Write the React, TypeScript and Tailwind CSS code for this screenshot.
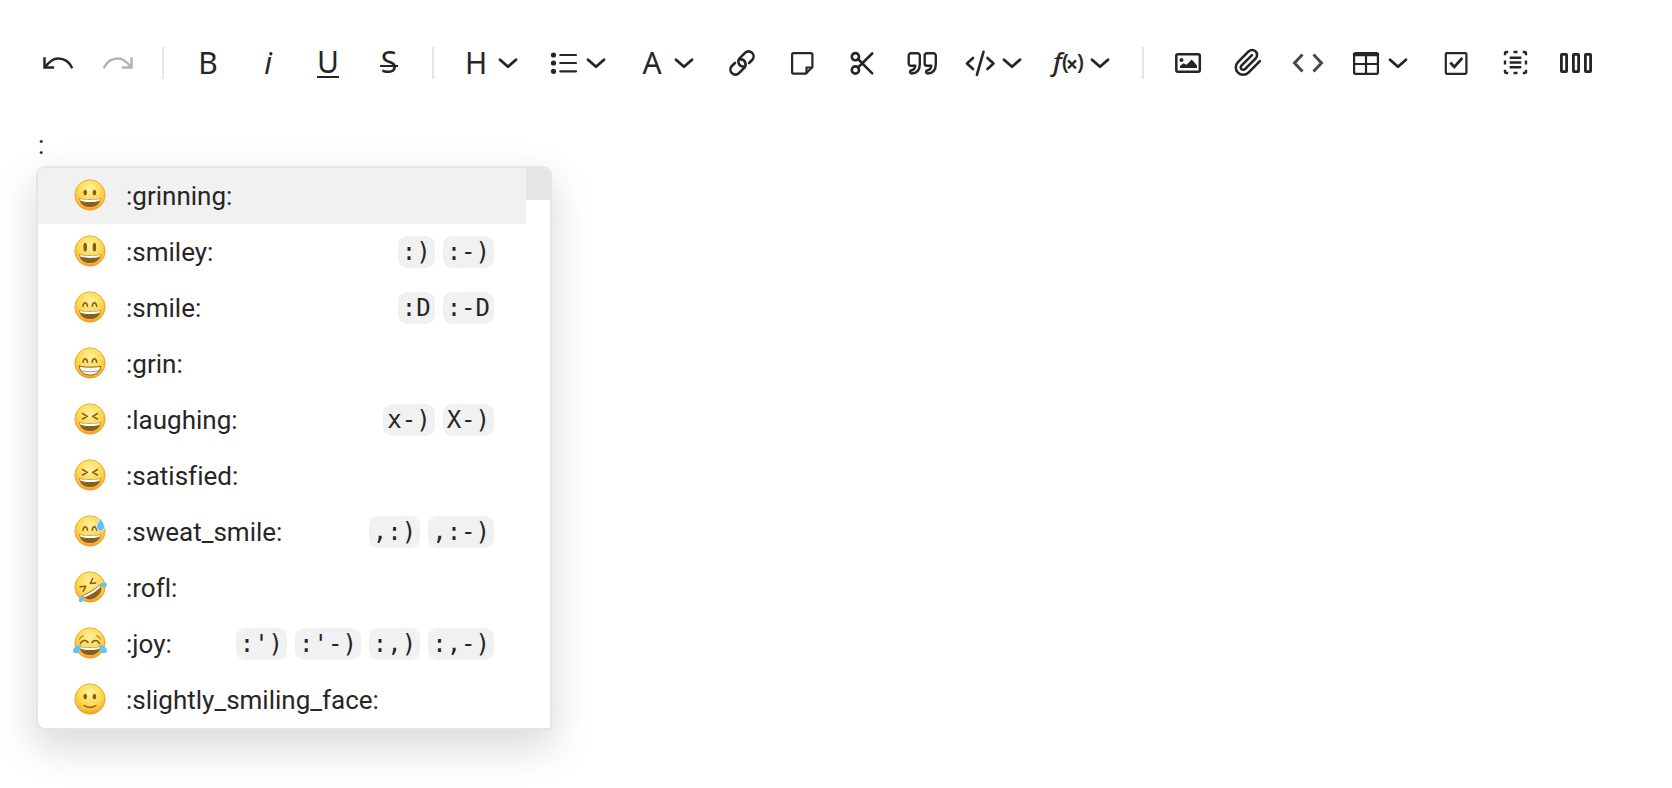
import { ReactNode } from "react";

interface IconProps {
    children: ReactNode;
    width?: number;
}

function Icon({ children, width = 2.2 }: IconProps) {
    return (
        <svg
            viewBox="0 0 32 32"
            className="size-8 shrink-0"
            fill="none"
            stroke="currentColor"
            strokeWidth={width}
            strokeLinecap="round"
            strokeLinejoin="round"
            aria-hidden="true"
        >
            {children}
        </svg>
    )
}

interface ToolProps {
    label: string;
    children: ReactNode;
    menu?: boolean;
    disabled?: boolean;
}

function Tool({ label, children, menu, disabled }: ToolProps) {
    return (
        <button
            type="button"
            aria-label={label}
            aria-haspopup={menu ? "menu" : undefined}
            disabled={disabled}
            className="flex h-16 shrink-0 items-center px-3.5 text-[#262626] disabled:text-[#b3b3b3] aria-[haspopup=menu]:px-3"
        >
            {children}
            {menu && (
                <Icon width={2.8}>
                    <path d="M8 12.7l8 7 8-7" />
                </Icon>
            )}
        </button>
    )
}

function Letter({ children }: { children: ReactNode }) {
    return <span className="flex size-8 items-center justify-center font-['Noto_Sans',sans-serif] text-[30px] leading-8">{children}</span>
}

function Separator() {
    return <span className="mx-3.5 h-8 w-0.5 shrink-0 bg-[#e5e5e5]" />
}

function Toolbar() {
    return (
        <div role="toolbar" aria-label="Formatting" className="flex items-center px-7 pt-[31px]">
            <Tool label="Undo">
                <Icon width={2.5}>
                    <g strokeLinecap="butt" strokeLinejoin="miter">
                        <path d="M2.5 10.3v10.2h9.6" />
                        <path d="M3 20.5C7.5 14 11.5 11.5 16 11.5c6 0 11.5 3.5 14.2 9.7" />
                    </g>
                </Icon>
            </Tool>
            <Tool label="Redo" disabled>
                <Icon width={2.5}>
                    <g strokeLinecap="butt" strokeLinejoin="miter">
                        <path d="M29.5 10.3v10.2h-9.6" />
                        <path d="M29 20.5C24.5 14 20.5 11.5 16 11.5c-6 0-11.5 3.5-14.2 9.7" />
                    </g>
                </Icon>
            </Tool>
            <Separator />
            <Tool label="Bold"><Letter>B</Letter></Tool>
            <Tool label="Italic"><Letter><i>i</i></Letter></Tool>
            <Tool label="Underline">
                <Letter><span className="border-b-2 border-current leading-7">U</span></Letter>
            </Tool>
            <Tool label="Strikethrough">
                <svg viewBox="0 0 32 32" className="size-8 overflow-visible fill-current font-['Noto_Sans',sans-serif]" aria-hidden="true">
                    <text x="17" y="26" fontSize="30" textAnchor="middle">S</text>
                    <rect x="8" y="18" width="18" height="2" />
                </svg>
            </Tool>
            <Separator />
            <Tool label="Heading" menu><Letter>H</Letter></Tool>
            <Tool label="List" menu>
                <Icon>
                    <g fill="currentColor" stroke="none">
                        <circle cx="5.5" cy="8" r="2.6" />
                        <circle cx="5.5" cy="16" r="2.6" />
                        <circle cx="5.5" cy="24.3" r="2.6" />
                    </g>
                    <path d="M12.3 8h15.7M12.3 16h15.7M12.3 24.3h15.7" />
                </Icon>
            </Tool>
            <Tool label="Text color" menu><Letter>A</Letter></Tool>
            <Tool label="Link">
                <Icon width={2.6}>
                    <g transform="translate(16 16) rotate(-45)">
                        <path d="M5 5H9.3A5 5 0 0 0 9.3-5H1.8A5 5 0 0 0-1.7 3.4" />
                        <path d="M-5-5H-9.3A5 5 0 0 0-9.3 5H-1.8A5 5 0 0 0 1.7-3.4" />
                    </g>
                </Icon>
            </Tool>
            <Tool label="Note">
                <Icon>
                    <path d="M7.6 6.2h17.3a1.5 1.5 0 0 1 1.5 1.5v12.3l-6.4 6.6H7.6a1.5 1.5 0 0 1-1.5-1.5V7.7a1.5 1.5 0 0 1 1.5-1.5z" />
                    <path d="M26 20.5h-5.5v5.5" />
                </Icon>
            </Tool>
            <Tool label="Cut">
                <Icon width={2.6}>
                    <circle cx="9.4" cy="9.7" r="3.6" />
                    <circle cx="9.4" cy="23" r="3.6" />
                    <path d="M26.2 6.5L12 20.5M12 12l14.2 14.3" />
                </Icon>
            </Tool>
            <Tool label="Quote">
                <Icon width={2.4}>
                    <path d="M5 6.3h6.5a2.3 2.3 0 0 1 2.3 2.3V17c0 6-3 9.3-8.3 9.5-1.7 0-2-2.5-.4-3 2.8-.8 4-2.2 4.2-4.7H5a2.3 2.3 0 0 1-2.3-2.3V8.6A2.3 2.3 0 0 1 5 6.3z" />
                    <path d="M21 6.3h6.5a2.3 2.3 0 0 1 2.3 2.3V17c0 6-3 9.3-8.3 9.5-1.7 0-2-2.5-.4-3 2.8-.8 4-2.2 4.2-4.7H21a2.3 2.3 0 0 1-2.3-2.3V8.6A2.3 2.3 0 0 1 21 6.3z" />
                </Icon>
            </Tool>
            <Tool label="Code" menu>
                <Icon width={2.6}>
                    <path d="M9 11l-6 5.5L9 22M23.5 11l6 5.5-6 5.5M19.5 4.8l-6.6 23" />
                </Icon>
            </Tool>
            <Tool label="Formula" menu>
                <svg viewBox="0 0 32 32" className="size-8 shrink-0 overflow-visible fill-current font-['Noto_Sans',sans-serif]" aria-hidden="true">
                    <text x="1" y="24" fontSize="26" fontWeight="500" fontStyle="italic">f</text>
                    <text x="10" y="23" fontSize="21" fontWeight="600">(</text>
                    <text x="14" y="25" fontSize="21" fontWeight="700">×</text>
                    <text x="25" y="23" fontSize="21" fontWeight="600">)</text>
                </svg>
            </Tool>
            <Separator />
            <Tool label="Image">
                <Icon width={2.5}>
                    <rect x="4.3" y="7.3" width="23.5" height="17.5" rx="1.5" />
                    <g fill="currentColor" stroke="none">
                        <circle cx="9.5" cy="13" r="2" />
                        <path d="M8 21v-2l3.5-2.7 3 1.5 5.3-5.3 5.2 6V21z" />
                    </g>
                </Icon>
            </Tool>
            <Tool label="File">
                <Icon width={2.1}>
                    <path
                        transform="translate(1.3 .5) scale(1.24)"
                        d="m21.44 11.05-9.19 9.19a6 6 0 0 1-8.49-8.49l8.57-8.57A4 4 0 1 1 18 8.84l-8.59 8.57a2 2 0 0 1-2.83-2.83l8.49-8.48"
                    />
                </Icon>
            </Tool>
            <Tool label="HTML">
                <Icon width={3}>
                    <path className="stroke-[#4a4a4a]" strokeLinecap="butt" strokeLinejoin="miter" d="M10.5 7.5L2.5 16l8 8.500M21.5 7.500l8 8.500-8 8.500" />
                </Icon>
            </Tool>
            <Tool label="Table" menu>
                <Icon>
                    <rect x="4.1" y="6.2" width="23.8" height="20.6" rx="1.5" />
                    <path d="M4.5 7.5h23" strokeWidth="3.5" />
                    <path d="M4 17h24M16 8v18" />
                </Icon>
            </Tool>
            <Tool label="Checkbox">
                <Icon>
                    <rect x="5.8" y="6.2" width="20.6" height="20.6" rx="1" />
                    <path d="M10.3 15.5l4 4.500 8-9" strokeWidth="2.7" strokeLinecap="butt" strokeLinejoin="miter" />
                </Icon>
            </Tool>
            <Tool label="Template">
                <Icon width={2.4}>
                    <path d="M5 8.200V6.500A1.500 1.500 0 0 1 6.500 5H8.200M22.800 5h1.700A1.500 1.500 0 0 1 26 6.500v1.700M26 22.800v1.700a1.500 1.500 0 0 1-1.500 1.500h-1.700M8.200 26H6.500A1.500 1.500 0 0 1 5 24.500v-1.700" strokeLinecap="butt" />
                    <path d="M13.500 5h4M13.500 26h4M5 13.500v4M26 13.500v4" strokeLinecap="butt" />
                    <path d="M9.700 10.800h11.600M9.700 15.500h11.600M9.700 20.200h11.600" strokeLinecap="butt" />
                </Icon>
            </Tool>
            <Tool label="Columns">
                <Icon width={2.8}>
                    <rect x="1.4" y="7.4" width="5.2" height="17.2" rx=".5" />
                    <rect x="13.4" y="7.4" width="5.2" height="17.2" rx=".5" />
                    <rect x="25.4" y="7.4" width="5.2" height="17.2" rx=".5" />
                </Icon>
            </Tool>
        </div>
    )
}

const dotEyes = (
    <g fill="#8a5a14">
        <ellipse cx="11.2" cy="12.5" rx="1.8" ry="2.7" />
        <ellipse cx="20.4" cy="12.5" rx="1.8" ry="2.7" />
    </g>
);

const tallEyes = (
    <g fill="#8a5a14">
        <ellipse cx="11.2" cy="11.2" rx="1.8" ry="4.4" />
        <ellipse cx="20.4" cy="11.2" rx="1.8" ry="4.4" />
    </g>
);

const archEyes = (
    <path d="M9 14.2c.8-4.6 3.6-4.6 4.5 0M18.2 14.2c.8-4.6 3.6-4.6 4.5 0" stroke="#8a5a14" strokeWidth="1.6" />
);

const squintEyes = (
    <path d="M8.5 9.5l4.8 2.8-4.8 2.7M23.5 9.5l-4.8 2.8 4.8 2.7" stroke="#8a5a14" strokeWidth="1.5" />
);

const mouth = "M5.4 18.2c3.5 1.3 17.7 1.3 21.2 0-.2 5.5-4.6 8.8-10.600 8.800S5.600 23.700 5.400 18.200z";

const openMouth = (
    <>
        <path d={mouth} fill="#8a601f" />
        <path d="M6 18.800c3.500 1.200 16.500 1.200 20 0 0 .8-.2 1.500-.5 2-4.300 1.600-14.700 1.600-19 0-.3-.5-.5-1.200-.5-2z" fill="#fff" />
    </>
);

const toothyMouth = (
    <>
        <path d={mouth} fill="#fff" stroke="#80551a" strokeWidth=".9" />
        <path d="M6.5 22.600c4 1.500 15 1.500 19 0" stroke="#8f7a55" strokeWidth=".8" />
        <path d="M11 20v6M16 20v7M21 20v6" stroke="#c8c8c8" strokeWidth=".5" />
    </>
);

interface EmojiInfo {
    name: string;
    face: ReactNode;
    tilt?: boolean;
    shortcuts: string[];
}

const emojis: EmojiInfo[] = [
    { name: "grinning", face: <>{dotEyes}{openMouth}</>, shortcuts: [] },
    { name: "smiley", face: <>{tallEyes}{openMouth}</>, shortcuts: [":)", ":-)"] },
    { name: "smile", face: <>{archEyes}{openMouth}</>, shortcuts: [":D", ":-D"] },
    { name: "grin", face: <>{archEyes}{toothyMouth}</>, shortcuts: [] },
    { name: "laughing", face: <>{squintEyes}{openMouth}</>, shortcuts: ["x-)", "X-)"] },
    { name: "satisfied", face: <>{squintEyes}{openMouth}</>, shortcuts: [] },
    {
        name: "sweat_smile",
        face: (
            <>
                {archEyes}
                {openMouth}
                <path d="M26.5 2.500c-2 3.500-3.800 6-3.800 8.500a3.900 3.900 0 0 0 7.800 0c0-2.500-2-5-4-8.500z" fill="#62bdf5" stroke="#e3f5ff" strokeWidth=".8" />
            </>
        ),
        shortcuts: [",:)", ",:-)"],
    },
    {
        name: "rofl",
        face: (
            <>
                {squintEyes}
                {openMouth}
                <path d="M6.500 17.800c-3 .2-6.500 1-7 3.200-.3 2 2.600 3 4.500 1.600 1.500-1.200 2.200-3 2.500-4.800zM25.500 17.800c3 .2 6.500 1 7 3.200.3 2-2.600 3-4.500 1.600-1.500-1.200-2.200-3-2.500-4.800z" fill="#62c3f5" />
            </>
        ),
        tilt: true,
        shortcuts: [],
    },
    {
        name: "joy",
        face: (
            <>
                <path d="M6.500 15.500c1.500-3.500 5.500-4 7.500-1M18 14.500c2-3 6-2.500 7.500 1" stroke="#8a5a14" strokeWidth="1.6" />
                <path d="M5.500 11c1-1.800 2.300-2.800 4-3.200M22.500 7.800c1.700.4 3 1.400 4 3.200" stroke="#a8701c" strokeWidth="1.1" />
                {openMouth}
                <path d="M6.500 17c-3.500.4-7.200 2.500-7.500 5.500-.2 3 4 3.800 5.900 1.400C6.300 22 6.600 19.500 6.500 17zM25.500 17c3.500.4 7.200 2.500 7.500 5.500.2 3-4 3.800-5.900 1.400-1.400-1.900-1.700-4.400-1.600-6.900z" fill="#5fc4f7" />
            </>
        ),
        shortcuts: [":')", ":'-)", ":,)", ":,-)"],
    },
    {
        name: "slightly_smiling_face",
        face: <>{dotEyes}<path d="M10 21.500c3.500 2.600 8.500 2.600 12 0" stroke="#8a5a14" strokeWidth="1.4" /></>,
        shortcuts: [],
    },
];

function Emoji({ emoji }: { emoji: EmojiInfo }) {
    return (
        <svg viewBox="0 0 32 32" className="size-8 shrink-0 overflow-visible" fill="none" strokeLinecap="round" strokeLinejoin="round" aria-hidden="true">
            <circle cx="16" cy="15" r="15.2" fill="url(#skin)" stroke="#e99a2c" strokeWidth=".7" />
            <g transform={emoji.tilt ? "rotate(-33 16 16)" : undefined}>{emoji.face}</g>
        </svg>
    )
}

function EmojiRow({ emoji, active }: { emoji: EmojiInfo; active: boolean }) {
    return (
        <li role="option" aria-selected={active} className="aria-selected:bg-[#f1f1f1]">
            <button type="button" className="flex h-14 w-full items-center pr-8 pl-9 text-left">
                <Emoji emoji={emoji} />
                <span className="ml-5 flex-1 [font-variant-ligatures:none]">:{emoji.name}:</span>
                <span className="flex gap-2">
                    {emoji.shortcuts.map(shortcut => (
                        <kbd key={shortcut} className="h-8 rounded-[9px] bg-[#f1f1f1] px-1 font-['DejaVu_Sans_Mono',monospace] text-[24px] leading-8">{shortcut}</kbd>
                    ))}
                </span>
            </button>
        </li>
    )
}

function EmojiPopup() {
    return (
        <div className="absolute top-[71px] left-9 flex w-[516px] overflow-hidden rounded-[9px] rounded-br-none border-2 border-[#e5e5e5] bg-white shadow-[0_16px_40px_2px_rgba(0,0,0,0.15)]">
            <svg className="absolute size-0" aria-hidden="true">
                <defs>
                    <radialGradient id="skin" cx=".5" cy=".32" r=".7">
                        <stop offset="0" stopColor="#fff3a0" />
                        <stop offset=".5" stopColor="#fedb58" />
                        <stop offset=".8" stopColor="#fbbd38" />
                        <stop offset="1" stopColor="#ee951c" />
                    </radialGradient>
                </defs>
            </svg>
            <ul role="listbox" aria-label="Emoji" className="flex-1">
                {emojis.map((emoji, i) => <EmojiRow key={emoji.name} emoji={emoji} active={i === 0} />)}
            </ul>
            <div className="w-6">
                <div className="h-8 bg-[#e5e5e5]" />
            </div>
        </div>
    )
}

export default function App() {
    return (
        <main className="min-h-screen bg-white font-[Roboto,sans-serif] text-[26px] text-[#262626]">
            <Toolbar />
            <div className="relative pt-5">
                <textarea aria-label="Document" defaultValue=":" rows={1} className="block w-full resize-none overflow-hidden px-[38px] leading-[60px] outline-none" />
                <EmojiPopup />
            </div>
        </main>
    )
}
